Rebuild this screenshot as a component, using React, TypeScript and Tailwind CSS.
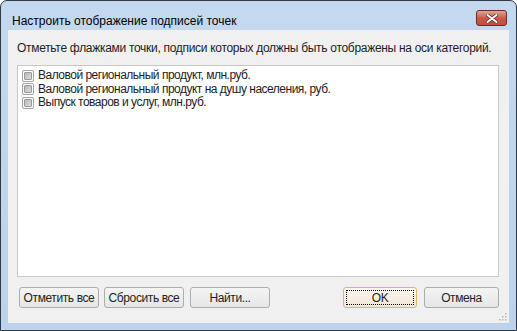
import type { ReactNode } from 'react';

const items = [
  'Валовой региональный продукт, млн.руб.',
  'Валовой региональный продукт на душу населения, руб.',
  'Выпуск товаров и услуг, млн.руб.',
];

function Checkbox() {
  return (
    <span className="w-[12px] h-[12px] shrink-0 rounded-[2px] border border-[#a3a3a3] bg-white p-[1px] flex">
      <span className="flex-1 rounded-[1px] border border-[#9a9a9a] bg-gradient-to-br from-[#b9b9b9] to-[#dcdcdc]" />
    </span>
  );
}

function Btn({ children, w, def }: { children: ReactNode; w: string; def?: boolean }) {
  return (
    <button
      className={`${w} h-[21px] rounded-[3px] border text-[12px] tracking-[-0.4px] leading-none text-[#1e1e1e] flex items-center justify-center whitespace-nowrap ${
        def
          ? 'border-[#e5b366] bg-gradient-to-b from-[#fbf6ef] to-[#efe6da] p-[2px]'
          : 'border-[#adadad] bg-gradient-to-b from-[#f4f4f4] to-[#e6e6e6]'
      }`}
    >
      {def ? (
        <span className="w-full h-full border border-dotted border-black flex items-center justify-center">{children}</span>
      ) : (
        children
      )}
    </button>
  );
}

export default function App() {
  return (
    <div className="w-[517px] h-[331px] bg-white" style={{ fontFamily: '"Liberation Sans", Arial, sans-serif' }}>
      <div className="w-full h-full rounded-t-[7px] border border-[#2f3a45] bg-gradient-to-b from-[#c4d8ee] to-[#bcd3eb] flex flex-col">
        <div className="h-[29px] shrink-0 flex items-start pl-[11px] pr-[9px]">
          <div className="pt-[12px] text-[12px] leading-[16px] text-black whitespace-nowrap">Настроить отображение подписей точек</div>
          <div className="ml-auto mt-[9px] w-[31px] h-[16px] rounded-[3px] border border-[#6b2b2b] bg-gradient-to-b from-[#e3a497] via-[#c85a4a] to-[#c9493a] flex items-center justify-center">
            <svg width="12" height="9" viewBox="0 0 12 9">
              <path d="M1.5 1 L10.5 8 M10.5 1 L1.5 8" stroke="#5a2020" strokeWidth="3.4" strokeLinecap="round" />
              <path d="M1.5 1 L10.5 8 M10.5 1 L1.5 8" stroke="#fff" strokeWidth="2" strokeLinecap="round" />
            </svg>
          </div>
        </div>
        <div className="mx-[7px] flex-1 bg-[#f0f0f0] flex flex-col relative">
          <div className="pt-[10px] pl-[9px] text-[12px] tracking-[-0.3px] leading-[16px] text-[#1e1e1e] whitespace-nowrap">
            Отметьте флажками точки, подписи которых должны быть отображены на оси категорий.
          </div>
          <div className="mt-[9px] ml-[9px] mr-[10px] h-[212px] bg-white border border-[#c9c9c9] pt-[3px] pl-[4px]">
            {items.map((t) => (
              <div key={t} className="h-[13.5px] flex items-center gap-[4px] text-[12px] tracking-[-0.5px] leading-[13px] text-[#1e1e1e] whitespace-nowrap">
                <Checkbox />
                <span>{t}</span>
              </div>
            ))}
          </div>
          <div className="mt-[10px] ml-[11px] mr-[10px] flex items-center">
            <Btn w="w-[80px]">Отметить все</Btn>
            <div className="w-[5px]" />
            <Btn w="w-[80px]">Сбросить все</Btn>
            <div className="w-[6px]" />
            <Btn w="w-[80px]">Найти...</Btn>
            <div className="flex-1" />
            <Btn w="w-[74px]" def>OK</Btn>
            <div className="w-[7px]" />
            <Btn w="w-[75px]">Отмена</Btn>
          </div>
          <svg className="absolute right-[2px] bottom-[2px]" width="9" height="9" viewBox="0 0 9 9">
            {[
              [7, 1],
              [7, 4],
              [4, 4],
              [7, 7],
              [4, 7],
              [1, 7],
            ].map(([x, y]) => (
              <rect key={`${x}-${y}`} x={x} y={y} width="1.5" height="1.5" fill="#b8b8b8" />
            ))}
          </svg>
        </div>
        <div className="h-[7px] shrink-0" />
      </div>
    </div>
  );
}
